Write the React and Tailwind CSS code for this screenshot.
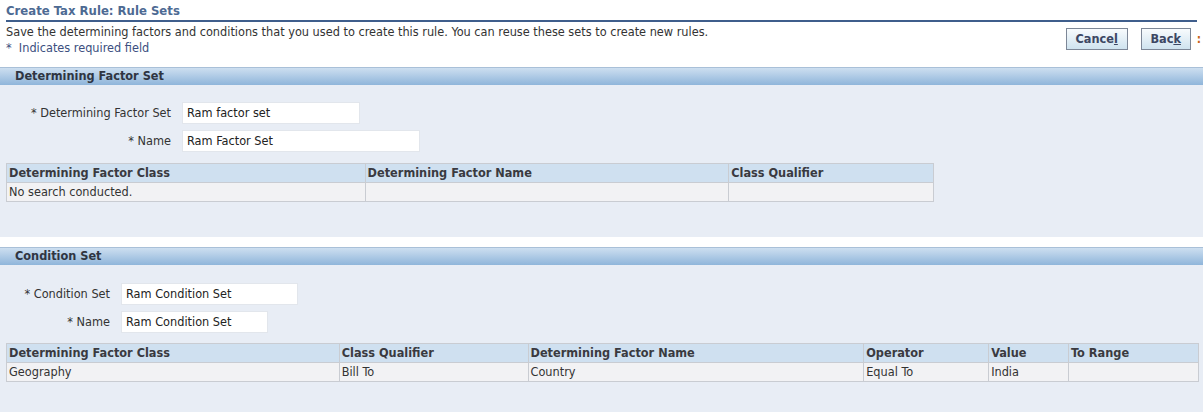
import React from 'react';

const font = { fontFamily: 'Tahoma, "DejaVu Sans Condensed", "Liberation Sans", sans-serif' };

const SectionHeader = ({ title }) => (
  <div className="h-[18px] border-t border-[#a9c0d8] bg-gradient-to-b from-[#cddff0] to-[#8fb5da] pl-[15px] text-[12.6px] font-bold leading-[16px] text-[#2f3542]">
    {title}
  </div>
);

const Field = ({ labelWidth, label, value, width }) => (
  <div className="flex items-center">
    <div className={`${labelWidth} pr-[11px] text-right text-[12.6px] text-[#333]`}>* {label}</div>
    <div className={`${width} h-[22px] border border-[#e2e6ec] bg-white pl-[4px] text-[12.6px] leading-[20px] text-[#222]`}>
      {value}
    </div>
  </div>
);

const Table = ({ width, cols, rows }) => (
  <table className={`${width} border-collapse text-[12.6px]`}>
    <thead>
      <tr className="h-[19px] bg-[#cfe0f0]">
        {cols.map((c) => (
          <th key={c.name} className={`${c.w} border border-[#c9ccd2] px-[2px] text-left font-bold leading-[16px] text-[#3a3a40]`}>
            {c.name}
          </th>
        ))}
      </tr>
    </thead>
    <tbody>
      {rows.map((r, i) => (
        <tr key={i} className="h-[19px] bg-[#f2f2f4]">
          {r.map((v, j) => (
            <td key={j} className="border border-[#c9ccd2] px-[2px] leading-[16px] text-[#333]">{v}</td>
          ))}
        </tr>
      ))}
    </tbody>
  </table>
);

export default function App() {
  return (
    <div className="h-[412px] w-[1203px] overflow-hidden bg-white" style={font}>
      {/* Page title */}
      <div className="mx-[6px] mt-[3px] border-b-2 border-[#3f5e8c] pb-[2px] text-[13px] font-bold leading-[15px] text-[#4d6a93]">
        Create Tax Rule: Rule Sets
      </div>

      <div className="flex items-start justify-between pl-[6px]">
        <div className="pt-[2px] text-[12.6px] leading-[16px]">
          <div className="text-[#333]">
            Save the determining factors and conditions that you used to create this rule. You can reuse these sets to create new rules.
          </div>
          <div className="text-[#3c4f80]">*&nbsp; Indicates required field</div>
        </div>
        <div className="mt-[6px] flex items-center gap-[13px] pr-[2px]">
          <button className="h-[22px] w-[62px] border border-[#7d8797] bg-gradient-to-b from-[#f8fbfd] to-[#cfe3ef] text-[12.6px] font-bold text-[#3c4763]">
            Cance<span className="underline">l</span>
          </button>
          <div className="flex items-center gap-[6px]">
            <button className="h-[22px] w-[50px] border border-[#7d8797] bg-gradient-to-b from-[#f8fbfd] to-[#cfe3ef] text-[12.6px] font-bold text-[#3c4763]">
              Bac<span className="underline">k</span>
            </button>
            <span className="text-[12px] font-bold text-[#c9651a]">:</span>
          </div>
        </div>
      </div>

      {/* Determining Factor Set */}
      <div className="mt-[11px]">
        <SectionHeader title="Determining Factor Set" />
        <div className="flex h-[152px] flex-col bg-[#e8edf5] pl-[6px] pt-[17px]">
          <div className="flex flex-col gap-[6px]">
            <Field labelWidth="w-[176px]" label="Determining Factor Set" value="Ram factor set" width="w-[178px]" />
            <Field labelWidth="w-[176px]" label="Name" value="Ram Factor Set" width="w-[238px]" />
          </div>
          <div className="mt-[11px]">
            <Table
              width="w-[928px]"
              cols={[
                { name: 'Determining Factor Class', w: 'w-[359px]' },
                { name: 'Determining Factor Name', w: 'w-[364px]' },
                { name: 'Class Qualifier', w: 'w-[205px]' },
              ]}
              rows={[['No search conducted.', '', '']]}
            />
          </div>
        </div>
      </div>

      {/* Condition Set */}
      <div className="mt-[10px]">
        <SectionHeader title="Condition Set" />
        <div className="flex h-[147px] flex-col bg-[#e8edf5] pl-[6px] pt-[18px]">
          <div className="flex flex-col gap-[6px]">
            <Field labelWidth="w-[115px]" label="Condition Set" value="Ram Condition Set" width="w-[177px]" />
            <Field labelWidth="w-[115px]" label="Name" value="Ram Condition Set" width="w-[147px]" />
          </div>
          <div className="mt-[10px]">
            <Table
              width="w-[1193px]"
              cols={[
                { name: 'Determining Factor Class', w: 'w-[333px]' },
                { name: 'Class Qualifier', w: 'w-[189px]' },
                { name: 'Determining Factor Name', w: 'w-[336px]' },
                { name: 'Operator', w: 'w-[125px]' },
                { name: 'Value', w: 'w-[80px]' },
                { name: 'To Range', w: 'w-[130px]' },
              ]}
              rows={[['Geography', 'Bill To', 'Country', 'Equal To', 'India', '']]}
            />
          </div>
        </div>
      </div>
    </div>
  );
}
